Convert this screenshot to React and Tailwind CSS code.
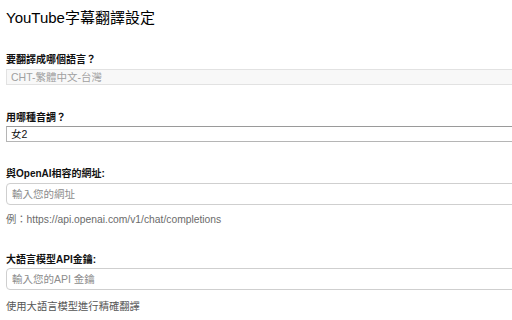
export default function App() {
  const font = { fontFamily: '"Liberation Sans", "Noto Sans CJK TC", sans-serif' };
  return (
    <div className="w-[512px] h-[320px] overflow-hidden bg-white text-[#111]" style={font}>
      <div className="pl-[6px] pt-[9px] w-[620px]">
        <h1 className="text-[15px] leading-[18px] text-black">YouTube字幕翻譯設定</h1>

        <div className="mt-[27px] text-[10px] leading-[12px] font-bold">要翻譯成哪個語言？</div>
        <div className="mt-[3px] h-[16px] border border-[#e2e2e2] bg-[#f8f8f8] pl-[4px] text-[10.5px] leading-[14px] text-[#a0a0a0]">
          CHT-繁體中文-台灣
        </div>

        <div className="mt-[27px] text-[10px] leading-[12px] font-bold">用哪種音調？</div>
        <div className="mt-[2px] h-[16px] border border-[#b5b5b5] border-t-[#9a9a9a] bg-white pl-[4px] text-[10.5px] leading-[14px] text-[#111]">
          女2
        </div>

        <div className="mt-[26px] text-[10px] leading-[12px] font-bold">與OpenAI相容的網址:</div>
        <input
          className="mt-[3px] block w-full h-[22px] rounded-[4px] border border-[#cfcfcf] px-[5px] text-[10.5px] outline-none placeholder:text-[#8c8c8c]"
          placeholder="輸入您的網址"
          style={font}
        />
        <div className="mt-[9px] text-[10.3px] leading-[12px] text-[#6b6b6b]">
          例：https://api.openai.com/v1/chat/completions
        </div>

        <div className="mt-[28px] text-[10px] leading-[12px] font-bold">大語言模型API金鑰:</div>
        <input
          className="mt-[2px] block w-full h-[22px] rounded-[4px] border border-[#cfcfcf] px-[5px] text-[10.5px] outline-none placeholder:text-[#8c8c8c]"
          placeholder="輸入您的API 金鑰"
          style={font}
        />
        <div className="mt-[11px] text-[10.3px] leading-[12px] text-[#555]">使用大語言模型進行精確翻譯</div>
      </div>
    </div>
  );
}
